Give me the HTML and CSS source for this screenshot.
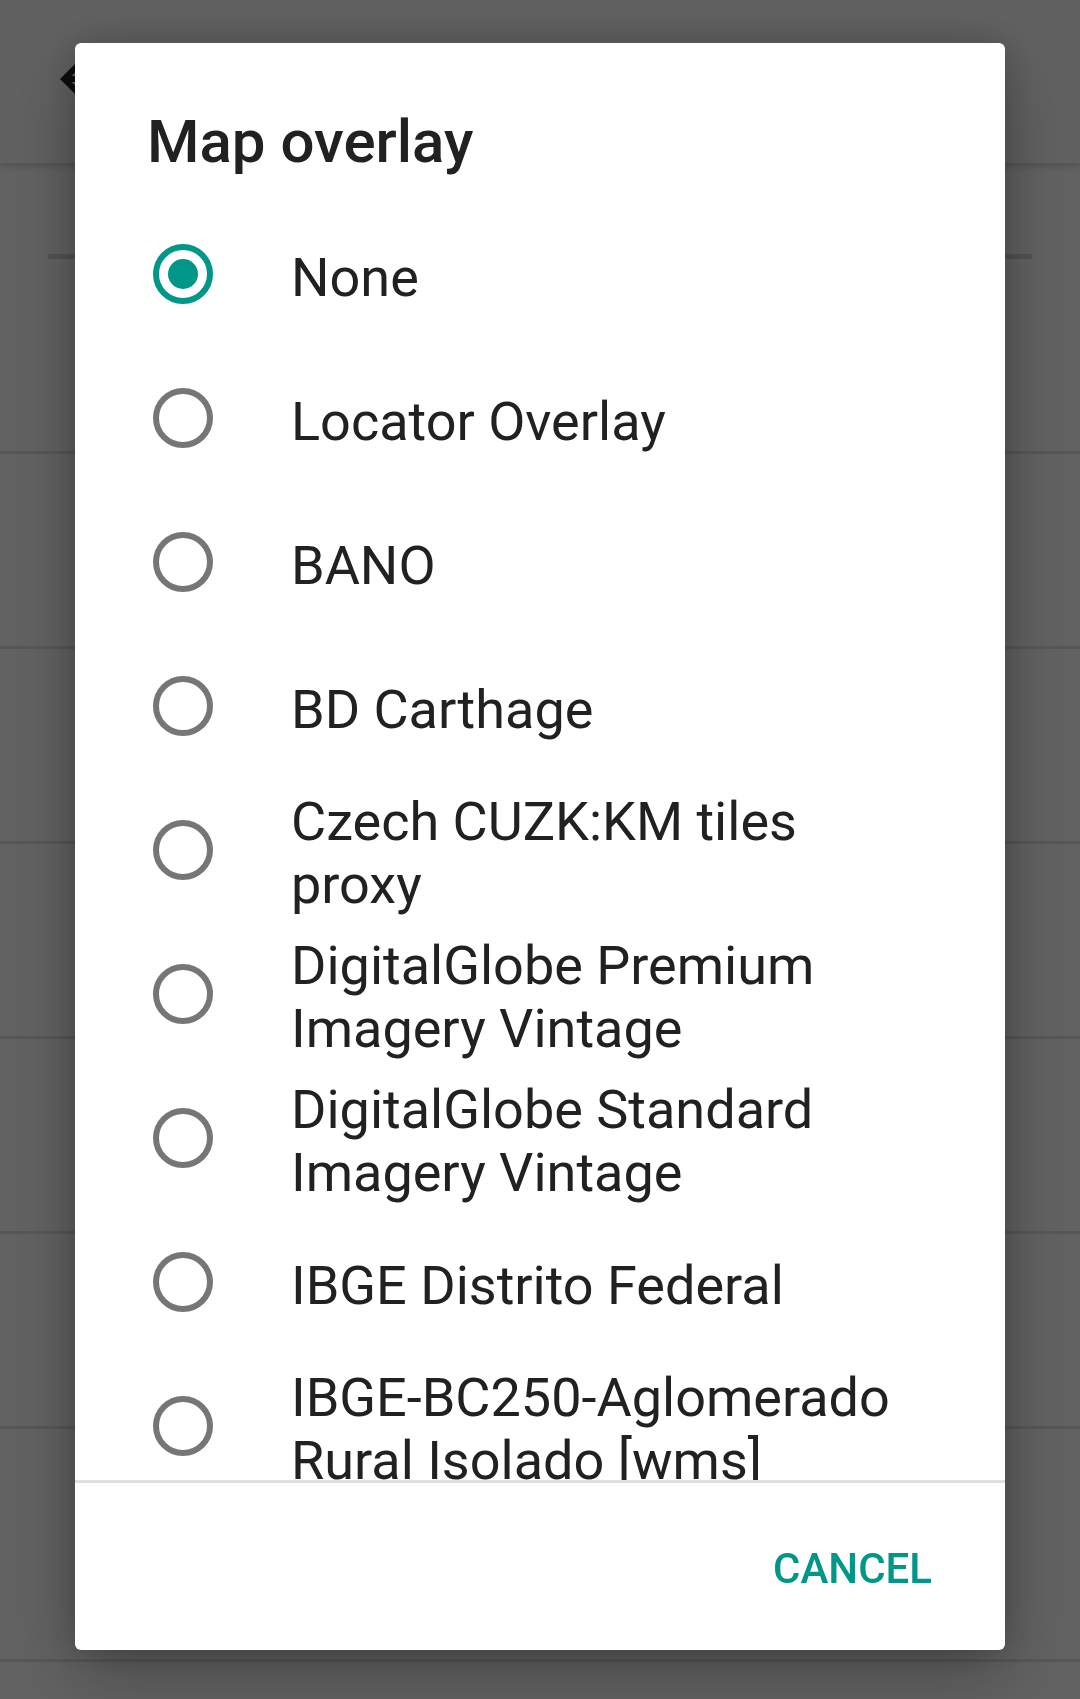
FILE: index.html
```html
<!DOCTYPE html>
<html lang="en">
<head>
<meta charset="utf-8">
<title>Map overlay</title>
<link rel="stylesheet" href="styles.css">
</head>
<body>
<div class="app">
  <header class="toolbar">
    <svg class="back" viewBox="0 0 24 24" width="72" height="72" aria-hidden="true">
      <path d="M20 11H7.83l5.59-5.59L12 4l-8 8 8 8 1.41-1.41L7.83 13H20v-2z"/>
    </svg>
  </header>
  <div class="search"><div class="underline"></div></div>
  <ul class="bglist">
    <li></li><li></li><li></li><li></li><li></li><li></li><li class="tall"></li>
  </ul>
</div>

<div class="scrim">
  <div class="dialog" role="dialog" aria-labelledby="dlg-title">
    <h1 class="title" id="dlg-title">Map overlay</h1>
    <div class="options">
      <label class="row"><span class="radio checked"></span><span class="text">None</span></label>
      <label class="row"><span class="radio"></span><span class="text">Locator Overlay</span></label>
      <label class="row"><span class="radio"></span><span class="text">BANO</span></label>
      <label class="row"><span class="radio"></span><span class="text">BD Carthage</span></label>
      <label class="row"><span class="radio"></span><span class="text">Czech CUZK:KM tiles proxy</span></label>
      <label class="row"><span class="radio"></span><span class="text">DigitalGlobe Premium Imagery Vintage</span></label>
      <label class="row"><span class="radio"></span><span class="text">DigitalGlobe Standard Imagery Vintage</span></label>
      <label class="row"><span class="radio"></span><span class="text">IBGE Distrito Federal</span></label>
      <label class="row"><span class="radio"></span><span class="text">IBGE-BC250-Aglomerado Rural Isolado [wms]</span></label>
    </div>
    <div class="divider"></div>
    <div class="buttons">
      <span class="btn">CANCEL</span>
    </div>
  </div>
</div>
</body>
</html>
```

FILE: styles.css
```css
* { box-sizing: border-box; }

html, body {
  margin: 0;
  padding: 0;
  width: 1080px;
  height: 1699px;
  overflow: hidden;
  background: #f5f5f5;
  font-family: Roboto, "Noto Sans", "Liberation Sans", sans-serif;
}

.app {
  width: 1080px;
  height: 1699px;
  background: #f5f5f5;
}

.toolbar {
  height: 163px;
  background: #f2f2f2;
  padding: 43px 0 0 48px;
  box-shadow: 0 3px 8px rgba(0, 0, 0, 0.18);
  position: relative;
  z-index: 1;
}

.back {
  display: block;
  fill: #212121;
}

.search {
  height: 96px;
  padding: 91px 48px 0 48px;
}

.underline {
  height: 5px;
  background: #cfcfcf;
}

.bglist {
  list-style: none;
  margin: 0;
  padding: 0;
}

.bglist li {
  height: 195px;
  border-bottom: 3px solid #dadada;
}

.bglist li.tall {
  height: 233px;
}

.scrim {
  position: fixed;
  inset: 0;
  z-index: 10;
  background: rgba(0, 0, 0, 0.6);
  display: flex;
  justify-content: center;
  align-items: flex-start;
  padding-top: 43px;
}

.dialog {
  width: 930px;
  height: 1607px;
  background: #ffffff;
  border-radius: 6px;
  display: flex;
  flex-direction: column;
  overflow: hidden;
  box-shadow: 0 24px 70px rgba(0, 0, 0, 0.28), 0 0 36px rgba(0, 0, 0, 0.18);
}

.title {
  margin: 0;
  padding: 64px 72px 0 72px;
  font-size: 60px;
  line-height: 70px;
  font-weight: 500;
  color: #212121;
  flex: none;
}

.options {
  flex: 1;
  min-height: 0;
  overflow: hidden;
  padding-top: 25px;
}

.row {
  display: flex;
  align-items: center;
  min-height: 144px;
  padding: 0 72px 0 78px;
}

.radio {
  flex: none;
  width: 60px;
  height: 60px;
  border: 6px solid #767676;
  border-radius: 50%;
  display: flex;
  align-items: center;
  justify-content: center;
}

.radio.checked {
  border-color: #009688;
}

.radio.checked::after {
  content: "";
  width: 30px;
  height: 30px;
  border-radius: 50%;
  background: #009688;
}

.text {
  margin-left: 78px;
  padding-top: 6px;
  font-size: 54px;
  line-height: normal;
  color: #212121;
}

.divider {
  flex: none;
  height: 3px;
  background: #e1e1e1;
}

.buttons {
  flex: none;
  height: 167px;
  display: flex;
  justify-content: flex-end;
  align-items: flex-start;
  padding: 61px 73px 0 0;
}

.btn {
  font-size: 42px;
  line-height: normal;
  font-weight: 500;
  color: #009688;
}
```
